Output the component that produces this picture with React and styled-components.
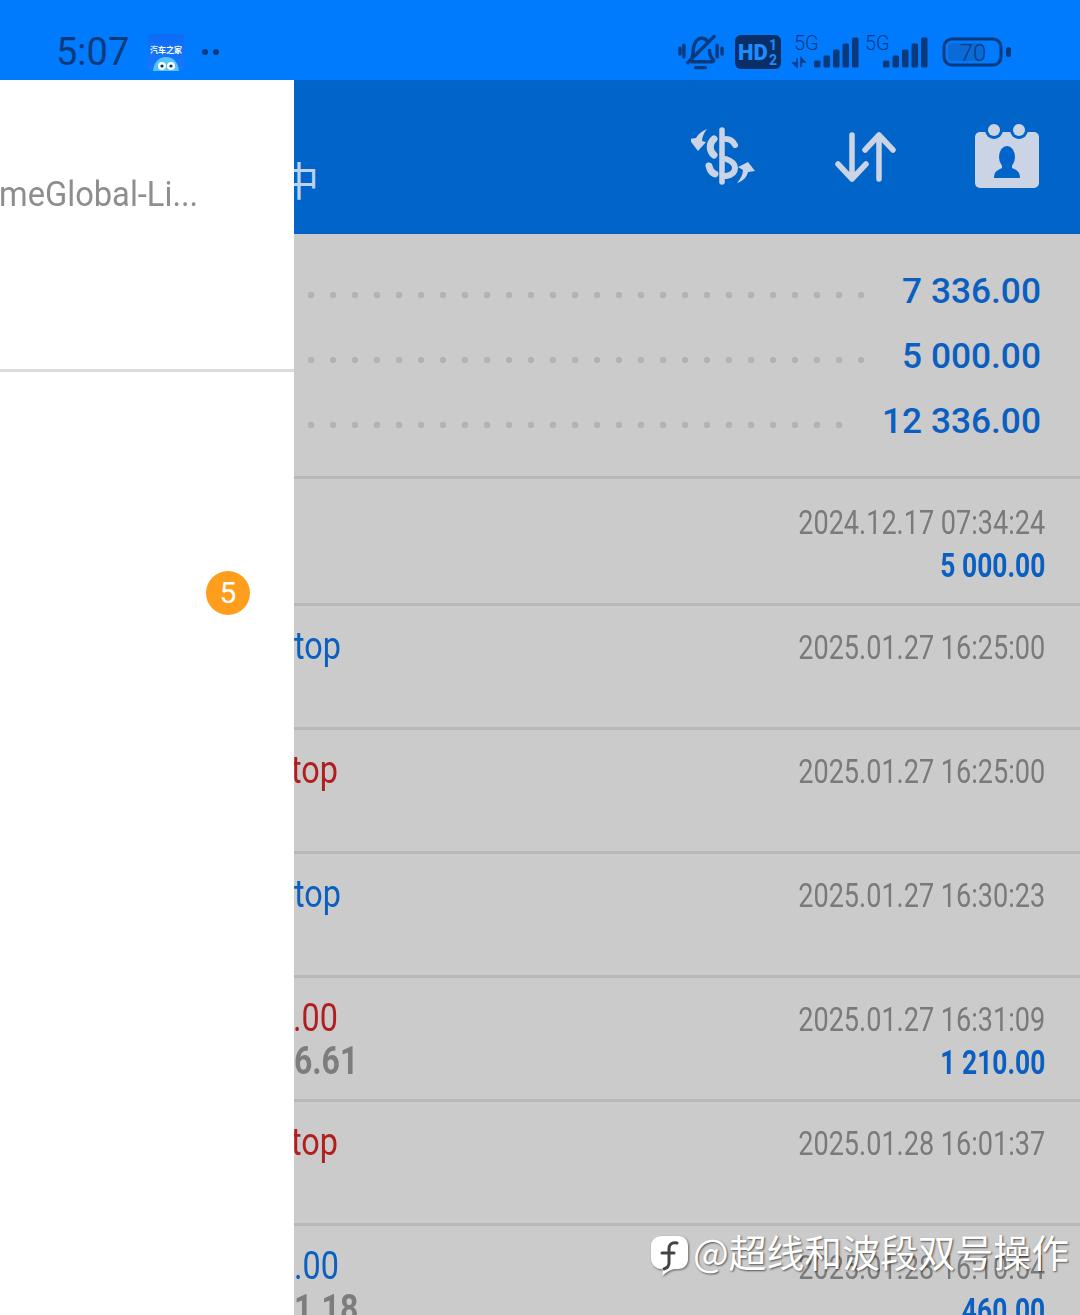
import React from "react";
import styled, { createGlobalStyle } from "styled-components";

const Global = createGlobalStyle`
  html, body { margin: 0; padding: 0; background: #cbcbcb; }
`;

const Page = styled.div`
  position: relative;
  width: 1080px;
  height: 1315px;
  overflow: hidden;
  display: flex;
  flex-direction: column;
  font-family: Roboto, "Liberation Sans", "Noto Sans CJK SC", sans-serif;
`;

const StatusBar = styled.div`
  flex: 0 0 80px;
  background: #007bfe;
  display: flex;
  align-items: center;
  justify-content: space-between;
  padding: 32px 68px 8px 56px;
  box-sizing: border-box;
  color: #0a3a7c;
`;
const StatusLeft = styled.div`display: flex; align-items: center;`;
const StatusRight = styled.div`display: flex; align-items: center;`;
const Clock = styled.span`
  font-size: 38px;
  font-weight: 400;
  width: 92px;
  line-height: 40px;
`;
const AppTile = styled.div`
  width: 36px;
  height: 37px;
  border-radius: 4px;
  background: linear-gradient(#0d6cf5, #1a78f8);
  display: flex;
  flex-direction: column;
  align-items: center;
  overflow: hidden;
  margin-right: 18px;
`;
const AppName = styled.span`
  font-family: "Noto Sans CJK SC", sans-serif;
  font-size: 8px;
  line-height: 10px;
  font-weight: 700;
  color: #fff;
  margin-top: 11px;
  white-space: nowrap;
`;
const AppFace = styled.svg`
  display: block;
  margin-top: 1px;
`;
const Dots = styled.div`
  display: flex;
  gap: 5px;
  & > i { width: 6px; height: 6px; border-radius: 50%; background: #0a3a7c; display: block; }
`;
const StatusIcon = styled.svg`
  display: block;
  flex: none;
  margin-left: ${p => p.$gap || 0}px;
  overflow: visible;
`;

const Body = styled.div`
  flex: 1;
  display: flex;
  min-height: 0;
`;

const Drawer = styled.aside`
  flex: 0 0 294px;
  background: #fff;
  display: flex;
  flex-direction: column;
  overflow: hidden;
`;
const AccountBlock = styled.div`
  height: 292px;
  box-sizing: border-box;
  border-bottom: 3px solid #dcdcdc;
  padding-top: 91px;
`;
const BadgeRow = styled.div`
  display: flex;
  justify-content: flex-end;
  padding: 199px 44px 0 0;
`;
const Badge = styled.div`
  width: 44px;
  height: 44px;
  border-radius: 50%;
  background: #ff9d1c;
  color: #fff;
  font-size: 30px;
  line-height: 44px;
  text-align: center;
`;

const Main = styled.main`
  flex: 1;
  min-width: 0;
  display: flex;
  flex-direction: column;
  background: #cbcbcb;
  overflow: hidden;
`;
const Toolbar = styled.div`
  flex: 0 0 154px;
  background: #0064c9;
  display: flex;
  align-items: center;
  padding-right: 41px;
  box-sizing: border-box;
`;
const TitleEnd = styled.span`
  font-family: "Noto Sans CJK SC", sans-serif;
  font-size: 40px;
  line-height: 50px;
  color: #bcd2ee;
  margin: 44px auto 0 -15px;
  width: 40px;
`;
const ToolIcon = styled.svg`
  display: block;
  flex: none;
  margin-left: ${p => p.$gap || 0}px;
  margin-top: -2px;
`;

const Summary = styled.section`
  flex: none;
  height: 245px;
  box-sizing: border-box;
  border-bottom: 3px solid #b8b8b8;
  padding: 35px 39px 0 14px;
  display: flex;
  flex-direction: column;
  gap: 21px;
`;
const SummaryRow = styled.div`
  height: 44px;
  display: flex;
  align-items: center;
  justify-content: space-between;
`;
const Leader = styled.div`
  width: ${p => p.$w}px;
  height: 8px;
  margin-top: 8px;
  background-image: radial-gradient(circle at 3px 4px, #b3b3b3 3px, transparent 3.6px);
  background-size: 22px 8px;
`;
const SummaryValue = styled.span`
  font-size: 35.3px;
  font-weight: 500;
  line-height: 44px;
  color: #0a5fc0;
  white-space: nowrap;
`;

const Row = styled.div`
  height: ${p => p.$h}px;
  box-sizing: border-box;
  border-bottom: 3px solid #b8b8b8;
  display: flex;
  justify-content: space-between;
  padding: ${p => p.$top}px 35px 0 0;
  flex: none;
`;
const Left = styled.div`
  display: flex;
  flex-direction: column;
  overflow: hidden;
  width: 90px;
  margin-top: -3px;
`;
const Right = styled.div`
  display: flex;
  flex-direction: column;
  align-items: flex-end;
`;
const Condensed = styled.span`
  display: block;
  white-space: nowrap;
  transform: scaleX(${p => p.$sx});
  transform-origin: ${p => p.$origin || "right"} center;
`;
const AccountName = styled(Condensed)`
  font-size: 35.5px;
  line-height: 46px;
  color: #8e8e8e;
  margin-left: -1px;
`;
const DateText = styled(Condensed)`
  font-size: 33px;
  line-height: 44px;
  color: #7a7a7a;
  margin-top: -1px;
`;
const Amount = styled(Condensed)`
  font-size: 33px;
  line-height: 42px;
  font-weight: 700;
  color: #0a5fc0;
`;
const OrderText = styled(Condensed)`
  font-size: 39px;
  line-height: 44px;
  color: ${p => (p.$tone === "red" ? "#b01e1e" : "#0a5fc0")};
  margin-left: ${p => p.$shift || 0}px;
`;
const Profit = styled(Condensed)`
  font-size: 39px;
  line-height: 42px;
  font-weight: 700;
  color: #7d7d7d;
`;

const Watermark = styled.div`
  position: absolute;
  left: 650px;
  top: 1225px;
  display: flex;
  align-items: center;
  gap: 4px;
  color: #fff;
  font-family: "Noto Sans CJK SC", sans-serif;
  font-size: 37.8px;
  line-height: 46px;
  white-space: nowrap;
  text-shadow: 1px 1px 2px rgba(0, 0, 0, 0.6);
`;
const BrandMark = styled.svg`
  flex: none;
  margin-top: 6px;
  filter: drop-shadow(1px 1px 1px rgba(0, 0, 0, 0.5));
`;

const MuteIcon = () => (
  <StatusIcon width="44" height="38" viewBox="0 0 45 38" fill="none" stroke="#0a3a7c" strokeWidth="3.5">
    <path d="M12 27c3-3 2-8 3-13 1-5 4-9 8-9s6 2 7 5M31 16c0 5 1 8 4 11 1 1 0 2-2 2H12" strokeLinejoin="round" />
    <path d="M17 35h10" strokeLinecap="round" />
    <path d="M8 31 37 2" />
    <path d="M1 15v6M5 12v12M39 12v12M44 15v6" strokeLinecap="round" />
  </StatusIcon>
);

const HdIcon = () => (
  <StatusIcon $gap={12} width="46" height="34" viewBox="0 0 46 34">
    <rect width="46" height="34" rx="6" fill="#0a2f68" />
    <text x="3" y="25" fontFamily="Roboto" fontWeight="900" fontSize="22" fill="#1c8cff">HD</text>
    <text x="34" y="15" fontFamily="Roboto" fontWeight="700" fontSize="14" fill="#1c8cff">1</text>
    <text x="34" y="30" fontFamily="Roboto" fontWeight="700" fontSize="14" fill="#1c8cff">2</text>
  </StatusIcon>
);

const SignalIcon = ({ gap, arrows, width, endShift }) => {
  const bars = [[0, 7], [9.5, 12], [19, 18], [28.5, 24], [38, 30]];
  const off = width - 45 + endShift;
  return (
    <StatusIcon $gap={gap} width={width} height="36" viewBox={`0 0 ${width} 36`}>
      <text x={arrows ? 2 : 0} y="16" fontFamily="Roboto" fontWeight="300" fontSize="20" fill="#0a3a7c">5G</text>
      {arrows && <path d="M5 24v9L1 29h4zM9 33v-9l4 4H9z" fill="#0a3a7c" stroke="#0a3a7c" strokeWidth="1.5" />}
      {bars.map(([x, h]) => (
        <rect key={x} x={x + off} y={33.5 - h} width="6.5" height={h} rx="1.5" fill="#0a3a7c" />
      ))}
    </StatusIcon>
  );
};

const BatteryIcon = () => (
  <StatusIcon $gap={13} width="70" height="30" viewBox="0 0 70 30">
    <rect x="2" y="2" width="57" height="26" rx="8" fill="none" stroke="#0a3a7c" strokeWidth="3" />
    <rect x="6" y="6" width="35" height="18" rx="4" fill="#0a6ad8" />
    <text x="31" y="24" textAnchor="middle" fontFamily="Roboto" fontWeight="300" fontSize="24" fill="#0a3a7c">70</text>
    <rect x="64" y="10" width="5" height="10" rx="2.5" fill="#0a3a7c" />
  </StatusIcon>
);

const DollarIcon = () => (
  <ToolIcon width="66" height="58" viewBox="1 0 66 58" fill="none" stroke="#cbd4e4">
    <path d="M32 3v52" strokeWidth="5.5" strokeLinecap="round" />
    <path d="M24 12c-5 4-5 12 0 16" strokeWidth="7" strokeLinecap="round" />
    <path d="M36 12c4 0 7 2 9 6M36 32c6 2 9 5 9 9 0 4-3 7-9 8" strokeWidth="6" strokeLinecap="round" />
    <path d="M19 39c1 4 3 7 6 8" strokeWidth="7" strokeLinecap="round" />
    <path d="M17 2C12 4 8 7 6 11L-1 12 8 24 16 15 12 14C12 10 14 6 17 2z" fill="#cbd4e4" stroke="none" />
    <path d="M47 56C53 54 57 50 58 45L65 44 58 35 48 40 53 43C53 47 51 51 47 56z" fill="#cbd4e4" stroke="none" />
  </ToolIcon>
);

const SwapIcon = () => (
  <ToolIcon $gap={78} width="62" height="58" viewBox="0 0 62 58" fill="none" stroke="#cbd4e4" strokeWidth="5.5" strokeLinecap="round" strokeLinejoin="round">
    <path d="M17 8v44M3 37l14 15 14-15" />
    <path d="M44 52V8M30 23 44 8l14 15" />
  </ToolIcon>
);

const ContactIcon = () => (
  <ToolIcon $gap={78} width="64" height="64" viewBox="0 0 64 64">
    <rect y="8" width="64" height="56" rx="5" fill="#cbd4e4" />
    <circle cx="19" cy="6" r="9" fill="#0064c9" />
    <circle cx="44" cy="6" r="9" fill="#0064c9" />
    <circle cx="19" cy="6" r="6" fill="#cbd4e4" />
    <circle cx="44" cy="6" r="6" fill="#cbd4e4" />
    <ellipse cx="32" cy="33" rx="8" ry="11" fill="#0064c9" />
    <path d="M27 40v4c-4 2-8 3-8 10h26c0-7-4-8-8-10v-4z" fill="#0064c9" />
  </ToolIcon>
);

const BrandIcon = () => (
  <BrandMark width="39" height="46" viewBox="0 0 39 46">
    <path d="M12 5h16c6 0 10 4 10 10v13c0 6-4 10-10 10h-3c-4 0-8 3-13 7 1-3 1-5 0-7C5 38 1 33 1 27V15C1 9 6 5 12 5z" fill="#fff" />
    <path d="M27 12c-6-1-8 2-8 6v14c0 3-2 5-5 6M12 22h12" fill="none" stroke="#444" strokeWidth="3" strokeLinecap="round" />
  </BrandMark>
);

const rows = [
  { h: 127, top: 23, date: "2024.12.17 07:34:24", amount: "5 000.00" },
  { h: 124, top: 21, date: "2025.01.27 16:25:00", text: "top", tone: "blue" },
  { h: 124, top: 21, date: "2025.01.27 16:25:00", text: "top", tone: "red", shift: -3 },
  { h: 124, top: 21, date: "2025.01.27 16:30:23", text: "top", tone: "blue" },
  { h: 124, top: 21, date: "2025.01.27 16:31:09", text: ".00", tone: "red", shift: -1, profit: "6.61", amount: "1 210.00" },
  { h: 124, top: 21, date: "2025.01.28 16:01:37", text: "top", tone: "red", shift: -3 },
  { h: 124, top: 21, date: "2025.01.28 16:10:54", text: ".00", tone: "blue", shift: 0, profit: "1.18", amount: "460.00" },
];

const totals = [
  { w: 564, value: "7 336.00" },
  { w: 564, value: "5 000.00" },
  { w: 542, value: "12 336.00" },
];

export default function App() {
  return (
    <Page>
      <Global />
      <StatusBar>
        <StatusLeft>
          <Clock>5:07</Clock>
          <AppTile>
            <AppName>汽车之家</AppName>
            <AppFace width="30" height="15" viewBox="0 0 30 15">
              <path d="M2 15C3 5 9 1 15 1s12 4 13 14z" fill="#52c6fa" />
              <circle cx="11" cy="10" r="4" fill="#fff" />
              <circle cx="20" cy="10" r="4" fill="#fff" />
              <circle cx="11" cy="10" r="1.6" fill="#0a2f68" />
              <circle cx="20" cy="10" r="1.6" fill="#0a2f68" />
            </AppFace>
          </AppTile>
          <Dots><i /><i /></Dots>
        </StatusLeft>
        <StatusRight>
          <MuteIcon />
          <HdIcon />
          <SignalIcon gap={11} arrows width={67} endShift={0} />
          <SignalIcon gap={6} width={64} endShift={-1} />
          <BatteryIcon />
        </StatusRight>
      </StatusBar>
      <Body>
        <Drawer>
          <AccountBlock><AccountName $sx={0.92} $origin="left">meGlobal-Li...</AccountName></AccountBlock>
          <BadgeRow><Badge>5</Badge></BadgeRow>
        </Drawer>
        <Main>
          <Toolbar>
            <TitleEnd>中</TitleEnd>
            <DollarIcon />
            <SwapIcon />
            <ContactIcon />
          </Toolbar>
          <Summary>
            {totals.map(t => (
              <SummaryRow key={t.value}>
                <Leader $w={t.w} />
                <SummaryValue>{t.value}</SummaryValue>
              </SummaryRow>
            ))}
          </Summary>
          {rows.map((r, i) => (
            <Row key={i} $h={r.h} $top={r.top}>
              <Left>
                {r.text && <OrderText $sx={0.83} $origin="left" $tone={r.tone} $shift={r.shift}>{r.text}</OrderText>}
                {r.profit && <Profit $sx={0.82} $origin="left">{r.profit}</Profit>}
              </Left>
              <Right>
                <DateText $sx={0.82}>{r.date}</DateText>
                {r.amount && <Amount $sx={0.8}>{r.amount}</Amount>}
              </Right>
            </Row>
          ))}
        </Main>
      </Body>
      <Watermark><BrandIcon />@超线和波段双号操作</Watermark>
    </Page>
  );
}
